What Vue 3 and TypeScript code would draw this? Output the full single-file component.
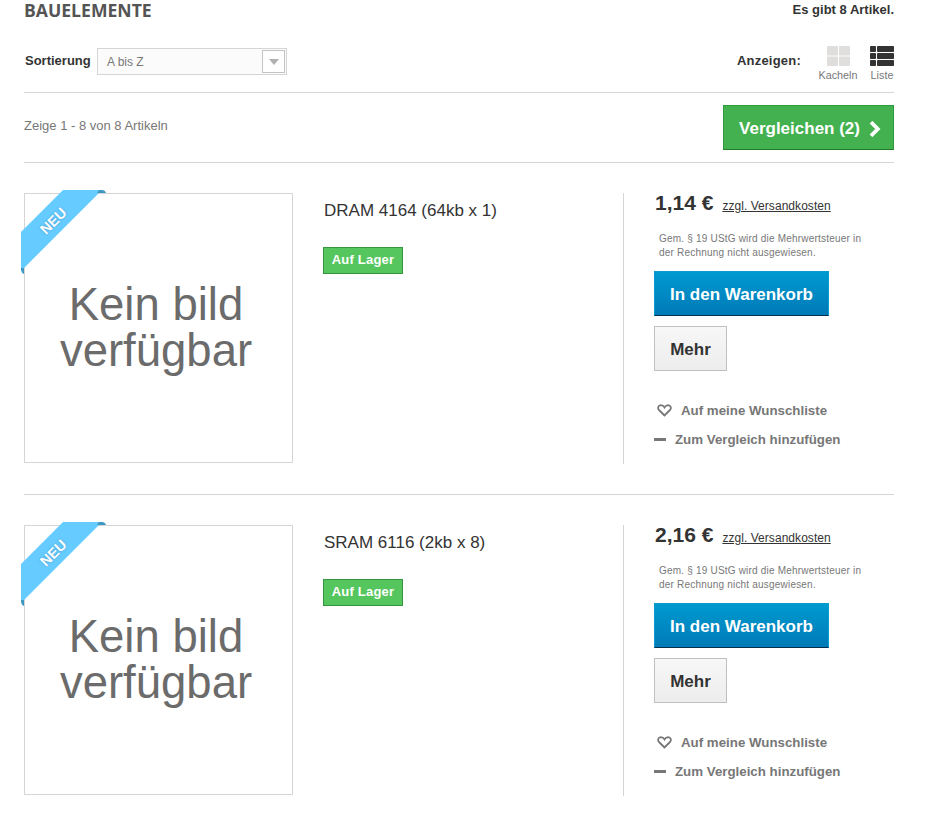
<script setup lang="ts">
interface Product { name: string; price: string }
const products: Product[] = [
  { name: 'DRAM 4164 (64kb x 1)', price: '1,14 €' },
  { name: 'SRAM 6116 (2kb x 8)', price: '2,16 €' },
]
</script>

<template>
  <div class="page">
    <div class="head">
      <h1 class="title">BAUELEMENTE</h1>
      <span class="count">Es gibt 8 Artikel.</span>
    </div>
    <div class="sortbar">
      <div class="sort">
        <span class="sort-label">Sortierung</span>
        <div class="select">
          <span class="select-text">A bis Z</span>
          <span class="select-btn"><i class="arrow"></i></span>
        </div>
      </div>
      <div class="views">
        <span class="views-label">Anzeigen:</span>
        <div class="view">
          <svg width="23" height="20" viewBox="0 0 23 20" fill="#e0dddd">
            <rect x="0" y="0" width="11" height="9.500" rx="1" />
            <rect x="12" y="0" width="11" height="9.500" rx="1" />
            <rect x="0" y="10.500" width="11" height="9.500" rx="1" />
            <rect x="12" y="10.500" width="11" height="9.500" rx="1" />
          </svg>
          <span>Kacheln</span>
        </div>
        <div class="view view-list">
          <svg width="24" height="20" viewBox="0 0 24 20" fill="#333">
            <rect x="0" y="0" width="6" height="6" rx="0.800" />
            <rect x="7" y="0" width="17" height="6" rx="0.800" />
            <rect x="0" y="7" width="6" height="6" rx="0.800" />
            <rect x="7" y="7" width="17" height="6" rx="0.800" />
            <rect x="0" y="14" width="6" height="6" rx="0.800" />
            <rect x="7" y="14" width="17" height="6" rx="0.800" />
          </svg>
          <span>Liste</span>
        </div>
      </div>
    </div>
    <div class="compare-bar">
      <span class="showing">Zeige 1 - 8 von 8 Artikeln</span>
      <button class="compare">
        Vergleichen (2)
        <svg width="12" height="16" viewBox="0 0 12 16"><path d="M2 1.200 L8.800 8 L2 14.800" fill="none" stroke="#fff" stroke-width="3.800" /></svg>
      </button>
    </div>
    <div v-for="p in products" :key="p.name" class="product">
      <div class="image">
        <span class="noimg">Kein bild<br />verfügbar</span>
        <div class="ribbon">
          <svg width="86" height="86" viewBox="0 0 86 86">
            <path d="M0 42 L42 0 H81 L0 81 Z" fill="#66ccff" />
            <path d="M78 0 H81 Q84 0 85 3 H76 Z" fill="#3d98c4" />
            <path d="M0 78 L3 78 V84 Q0.500 83 0 80 Z" fill="#3d98c4" />
          </svg>
          <span class="ribbon-text">NEU</span>
        </div>
      </div>
      <div class="info">
        <h2 class="name">{{ p.name }}</h2>
        <span class="stock">Auf Lager</span>
      </div>
      <div class="buy">
        <div class="price-row">
          <span class="price">{{ p.price }}</span>
          <a class="shipping">zzgl. Versandkosten</a>
        </div>
        <p class="tax">Gem. § 19 UStG wird die Mehrwertsteuer in der Rechnung nicht ausgewiesen.</p>
        <button class="cart">In den Warenkorb</button>
        <button class="more">Mehr</button>
        <div class="link link-wish">
          <svg width="15" height="13" viewBox="0 0 15 13"><path d="M7.500 11.500 L2 6 C0.300 4.200 1.200 1.300 3.800 1.200 C5.300 1.200 6.700 2 7.500 3.400 C8.300 2 9.700 1.200 11.200 1.200 C13.800 1.300 14.700 4.200 13 6 Z" fill="none" stroke="#777" stroke-width="1.800" /></svg>
          <span>Auf meine Wunschliste</span>
        </div>
        <div class="link link-compare">
          <i class="minus"></i>
          <span>Zum Vergleich hinzufügen</span>
        </div>
      </div>
    </div>
  </div>
</template>

<style>
html, body { margin: 0; background: #fff; }
</style>

<style scoped>
.page {
  box-sizing: border-box;
  width: 934px;
  padding: 0 40px 0 24px;
  font-family: "Liberation Sans", Arial, sans-serif;
  color: #333;
}
.head {
  display: flex;
  justify-content: space-between;
  align-items: flex-start;
  height: 36px;
}
.title {
  margin: 0;
  font: 700 17.600px/20px "Open Sans", sans-serif;
  color: #555454;
}
.count {
  font-size: 13px;
  font-weight: 700;
  line-height: 20px;
}
.sortbar {
  display: flex;
  justify-content: space-between;
  height: 56px;
  border-bottom: 1px solid #d6d4d4;
}
.sort {
  display: flex;
  align-items: flex-start;
  padding-top: 12px;
}
.sort-label {
  width: 72px;
  padding-left: 1px;
  font-size: 13px;
  font-weight: 700;
  line-height: 26px;
}
.select {
  box-sizing: border-box;
  display: flex;
  justify-content: space-between;
  align-items: center;
  width: 190px;
  height: 27px;
  padding: 0 1px 0 9px;
  background: #fbfbfb;
  border: 1px solid #d6d4d4;
}
.select-text {
  font-size: 12px;
  color: #777;
}
.select-btn {
  box-sizing: border-box;
  display: flex;
  align-items: center;
  justify-content: center;
  width: 23px;
  height: 23px;
  background: #fff;
  border: 1px solid #c4c4c4;
}
.arrow {
  border: 5px solid transparent;
  border-top: 6px solid #b0b0b0;
  border-bottom: 0;
}
.views {
  display: flex;
  align-items: flex-start;
  padding-top: 10px;
}
.views-label {
  width: 81px;
  padding-top: 7px;
  font-size: 13px;
  font-weight: 700;
  line-height: 16px;
  letter-spacing: 0.200px;
}
.view {
  display: flex;
  flex-direction: column;
  align-items: center;
  width: 40px;
  margin-right: 12px;
  font-size: 10.800px;
  line-height: 12px;
  color: #777;
}
.view svg { margin-bottom: 3px; }
.view-list {
  width: 24px;
  margin-right: 0;
}
.compare-bar {
  display: flex;
  justify-content: space-between;
  align-items: flex-start;
  height: 69px;
  border-bottom: 1px solid #d6d4d4;
}
.showing {
  margin-top: 25px;
  font-size: 13px;
  line-height: 16px;
  color: #777;
}
.compare {
  box-sizing: border-box;
  display: flex;
  align-items: center;
  justify-content: center;
  gap: 9px;
  width: 171px;
  height: 45px;
  margin-top: 12px;
  padding: 2px 0 0 3px;
  background: #43b14f;
  border: 1px solid #2f9a3b;
  border-bottom-color: #1f7a2a;
  color: #fff;
  font: 700 17px "Liberation Sans", Arial, sans-serif;
}
.product {
  display: flex;
  align-items: flex-start;
  height: 301px;
  padding-top: 30px;
  border-bottom: 1px solid #d6d4d4;
}
.product:last-child { border-bottom: 0; }
.image {
  position: relative;
  box-sizing: border-box;
  flex: none;
  display: flex;
  align-items: center;
  justify-content: center;
  width: 269px;
  height: 270px;
  padding-right: 5px;
  border: 1px solid #d6d4d4;
}
.noimg {
  font: 400 45.500px/46px "Liberation Sans", Arial, sans-serif;
  color: #6b6b6b;
  text-align: center;
}
.ribbon {
  position: absolute;
  left: -4px;
  top: -4px;
  width: 86px;
  height: 86px;
}
.ribbon svg { display: block; }
.ribbon-text {
  position: absolute;
  left: 17px;
  top: 23px;
  font-size: 14.500px;
  line-height: 16px;
  font-weight: 700;
  color: #fff;
  text-shadow: 0 0 2px rgba(40, 110, 160, 0.600);
  transform: rotate(-45deg);
}
.info {
  flex: none;
  width: 300px;
  margin-left: 30px;
}
.name {
  margin: 8px 0 0 1px;
  font-size: 17px;
  font-weight: 400;
  line-height: 20px;
}
.stock {
  display: block;
  box-sizing: border-box;
  width: 80px;
  margin-top: 26px;
  height: 27px;
  background: #55c65e;
  border: 1px solid #36943e;
  color: #fff;
  font-size: 13px;
  font-weight: 700;
  line-height: 23px;
  letter-spacing: 0.200px;
  text-align: center;
}
.buy {
  box-sizing: border-box;
  flex: 1;
  height: 271px;
  padding-left: 30px;
  border-left: 1px solid #d6d4d4;
  display: flex;
  flex-direction: column;
  align-items: flex-start;
}
.price-row {
  display: flex;
  align-items: baseline;
  gap: 9px;
  height: 30px;
  padding-left: 1px;
}
.price {
  font-size: 21px;
  font-weight: 700;
  line-height: 20px;
}
.shipping {
  font-size: 12px;
  letter-spacing: 0.050px;
  text-decoration: underline;
}
.tax {
  width: 215px;
  margin: 9px 0 0 5px;
  font-size: 10px;
  line-height: 14px;
  letter-spacing: 0.200px;
  color: #777;
}
.cart {
  box-sizing: border-box;
  width: 175px;
  height: 45px;
  margin-top: 11px;
  padding: 2px 0 0;
  background: linear-gradient(#009ad0, #007ab7);
  border: 1px solid #0a9ccf;
  border-bottom-color: #012f4d;
  color: #fff;
  font: 700 17px "Liberation Sans", Arial, sans-serif;
}
.more {
  box-sizing: border-box;
  width: 73px;
  height: 45px;
  margin-top: 10px;
  padding: 2px 0 0;
  background: linear-gradient(#f7f7f7, #ededed);
  border: 1px solid #c0c0c0;
  color: #333;
  font: 700 17px "Liberation Sans", Arial, sans-serif;
}
.link {
  display: flex;
  align-items: center;
  font-size: 13.300px;
  font-weight: 700;
  color: #777;
  height: 20px;
}
.link-wish {
  margin: 29px 0 0 3px;
  gap: 9px;
}
.link-compare {
  margin-top: 9px;
  gap: 9px;
}
.minus {
  width: 12px;
  height: 3px;
  background: #777;
}
</style>
